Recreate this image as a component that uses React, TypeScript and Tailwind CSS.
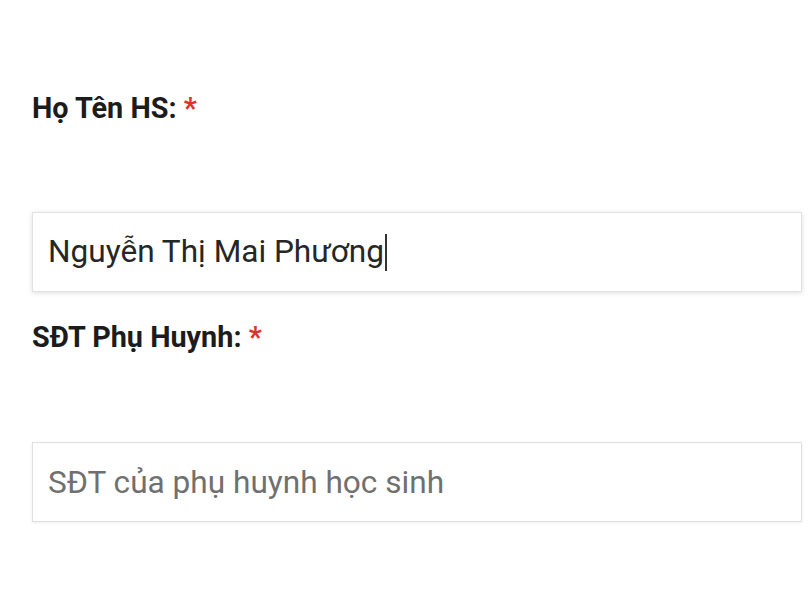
import { useState } from 'react';

export default function App() {
  const [phone, setPhone] = useState('');

  return (
    <div className="min-h-screen w-full bg-white pt-[88px] pl-[32px] pr-[8px] font-['Roboto',sans-serif]">
      <div>
        <label className="block h-[40px] text-[28.8px] leading-[40px] font-bold text-[#1c1c1c] mb-[84px]">
          Họ Tên HS: <span className="text-[#e0302b]">*</span>
        </label>
        <div
          role="textbox"
          className="flex h-[80px] items-center border border-[#e2e2e2] bg-white pl-[15px] text-[31.6px] text-[#262626] shadow-[0_1px_5px_rgba(0,0,0,0.13)]"
        >
          <span>Nguyễn Thị Mai Phương</span>
          <span className="ml-[1px] h-[37px] w-[1.5px] bg-[#333]" />
        </div>
      </div>

      <div className="mt-[25px]">
        <label className="block h-[40px] text-[28.8px] leading-[40px] font-bold text-[#1c1c1c] mb-[85px]">
          SĐT Phụ Huynh: <span className="text-[#e0302b]">*</span>
        </label>
        <input
          type="tel"
          value={phone}
          onChange={(e) => setPhone(e.target.value)}
          placeholder="SĐT của phụ huynh học sinh"
          className="block h-[80px] w-full border border-[#e0e0e0] bg-white pl-[15px] text-[31.6px] text-[#262626] shadow-[0_1px_3px_rgba(0,0,0,0.07)] outline-none placeholder:text-[#707070]"
        />
      </div>
    </div>
  );
}
